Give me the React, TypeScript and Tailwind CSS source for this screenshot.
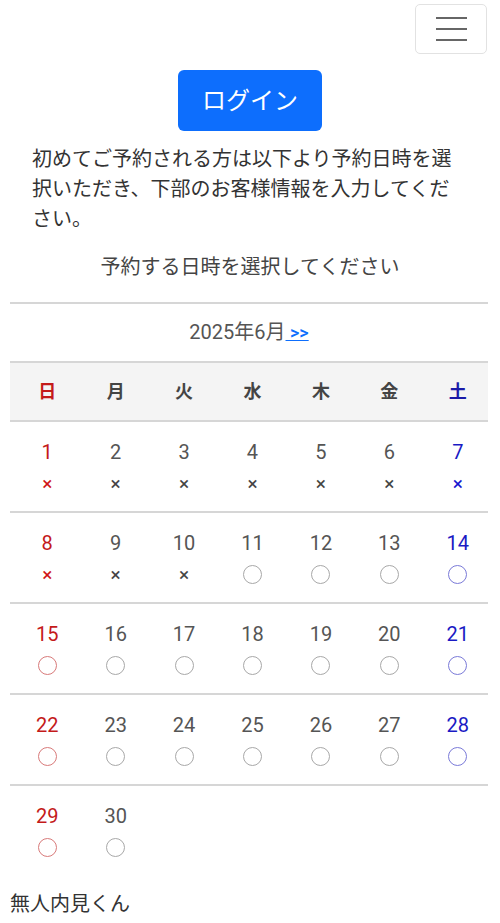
import React from 'react';

type Cell = { day: number; open: boolean } | null;

const WEEKDAYS = ['日', '月', '火', '水', '木', '金', '土'];

// June 2025 starts on a Sunday; 1-10 are closed
const DAYS: Cell[] = Array.from({ length: 30 }, (_, i) => ({ day: i + 1, open: i + 1 > 10 }));
const ROWS: Cell[][] = [];
for (let i = 0; i < 35; i += 7) {
  const row = DAYS.slice(i, i + 7);
  while (row.length < 7) row.push(null);
  ROWS.push(row);
}

const numColor = (col: number) => (col === 0 ? 'text-[#c41a1a]' : col === 6 ? 'text-[#1a1ac4]' : 'text-[#555]');
const crossColor = (col: number) => (col === 0 ? 'text-[#d01515]' : col === 6 ? 'text-[#1515d0]' : 'text-[#444]');
const ringColor = (col: number) => (col === 0 ? 'border-[#d87a7a]' : col === 6 ? 'border-[#7a7ad8]' : 'border-[#a8a8a8]');

const App: React.FC = () => {
  return (
    <div className="w-[500px] min-h-[923px] bg-white font-['Roboto','Noto_Sans_CJK_JP',sans-serif]">
      <div className="flex justify-end pt-[4px] pr-[13px]">
        <button
          type="button"
          className="w-[72px] h-[50px] border border-[#e2e2e2] rounded-[5px] flex flex-col items-center justify-center gap-[8.5px]"
        >
          <span className="block w-[31px] h-[2.5px] bg-[#666]" />
          <span className="block w-[31px] h-[2.5px] bg-[#666]" />
          <span className="block w-[31px] h-[2.5px] bg-[#666]" />
        </button>
      </div>

      <div className="flex justify-center mt-[16px]">
        <button
          type="button"
          className="w-[144px] h-[61px] rounded-[6px] bg-[#0d6efd] text-white text-[24px] leading-none"
        >
          ログイン
        </button>
      </div>

      <p className="mt-[13px] px-[32px] text-[20px] leading-[30px] text-[#333]">
        初めてご予約される方は以下より予約日時を選択いただき、下部のお客様情報を入力してください。
      </p>

      <p className="mt-[18px] text-center text-[20px] leading-[30px] text-[#444]">予約する日時を選択してください</p>

      <div className="mt-[20px] ml-[10px] mr-[12px] border-t-2 border-[#d6d6d6]">
        <div className="h-[57px] leading-[57px] text-center text-[20px] text-[#555]">
          <span>2025年6月</span>
          <a href="#" className="text-[#0d6efd] underline text-[18px] font-medium">
            {' '}&gt;&gt;
          </a>
        </div>

        <div className="border-y-2 border-[#d6d6d6] bg-[#f4f4f4]">
          <div className="grid grid-cols-7 ml-[3px] w-[479px] h-[57px] items-center">
            {WEEKDAYS.map((w, i) => (
              <div
                key={w}
                className={`text-center text-[18px] font-bold ${i === 0 ? 'text-[#c41a1a]' : i === 6 ? 'text-[#1a1aa8]' : 'text-[#444]'}`}
              >
                {w}
              </div>
            ))}
          </div>
        </div>

        {ROWS.map((row, r) => (
          <div key={r} className={r < ROWS.length - 1 ? 'border-b-2 border-[#d6d6d6]' : ''}>
            <div className="grid grid-cols-7 ml-[3px] w-[479px] h-[89px]">
              {row.map((cell, c) => (
                <div key={c} className="flex flex-col items-center pt-[16px]">
                  {cell && (
                    <>
                      <span className={`h-[28px] leading-[28px] text-[20px] ${numColor(c)}`}>{cell.day}</span>
                      <span className="h-[34px] flex items-center justify-center">
                        {cell.open ? (
                          <span className={`block w-[19px] h-[19px] rounded-full border-[1.5px] ${ringColor(c)}`} />
                        ) : (
                          <span className={`text-[19px] leading-none ${crossColor(c)}`}>×</span>
                        )}
                      </span>
                    </>
                  )}
                </div>
              ))}
            </div>
          </div>
        ))}
      </div>

      <p className="mt-[14px] px-[10px] text-[20px] leading-[30px] text-[#333]">無人内見くん</p>
    </div>
  );
};

export default App;
